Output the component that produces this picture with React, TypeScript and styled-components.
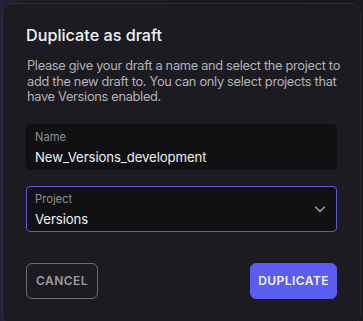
import React from 'react';
import styled, { createGlobalStyle } from 'styled-components';

const GlobalStyle = createGlobalStyle`
    html, body {
        margin: 0;
        padding: 0;
        background: #17171d;
        font-family: Inter, "Noto Sans", sans-serif;
        -webkit-font-smoothing: antialiased;
    }
`;

const Backdrop = styled.div`
    width: 363px;
    height: 321px;
    box-sizing: border-box;
    padding: 3px 2px 0 2px;
    overflow: hidden;
    background: linear-gradient(90deg, #24233a 0px, #1b1b24 30px, #18181e 100%);
`;

const Dialog = styled.div`
    box-sizing: border-box;
    height: 322px;
    display: flex;
    flex-direction: column;
    padding: 19px 23px 0 23px;
    background: #1c1b21;
    border: 1px solid #2c2c33;
    border-radius: 10px;
`;

const Title = styled.h2`
    margin: 0;
    font-size: 16.2px;
    font-weight: 500;
    line-height: 24px;
    color: #f2f2f4;
`;

const Description = styled.p`
    margin: 11px -4px 0 1px;
    font-size: 12.8px;
    letter-spacing: -0.3px;
    line-height: 15.6px;
    color: #b3b3b8;
`;

const Field = styled.div<{ $focused?: boolean }>`
    box-sizing: border-box;
    height: 46px;
    margin-top: ${p => (p.$focused ? '16px' : '19px')};
    padding: 5px 8px 0 8px;
    display: flex;
    align-items: center;
    background: #111114;
    border: 1px solid ${p => (p.$focused ? '#5a5ad8' : '#111114')};
    border-radius: 4px;
`;

const FieldBody = styled.div`
    flex: 1;
    display: flex;
    flex-direction: column;
    align-self: flex-start;
`;

const Label = styled.span`
    font-size: 11.2px;
    line-height: 14px;
    color: #8f8f95;
`;

const Value = styled.span`
    margin-top: 4px;
    font-size: 13.2px;
    letter-spacing: -0.1px;
    line-height: 18px;
    color: #f0f0f2;
`;

const Chevron = styled.svg`
    width: 12px;
    height: 12px;
    margin: 0 2px 4px 0;
`;

const Actions = styled.div`
    margin-top: 31px;
    display: flex;
    justify-content: space-between;
`;

const Button = styled.button<{ $primary?: boolean }>`
    box-sizing: border-box;
    height: 36px;
    padding: 0 ${p => (p.$primary ? '7px' : '9px')};
    font-family: Inter, "Noto Sans", sans-serif;
    font-size: 12px;
    font-weight: 600;
    letter-spacing: 0.45px;
    text-transform: uppercase;
    border-radius: 6px;
    cursor: pointer;
    color: ${p => (p.$primary ? '#f4f4ff' : '#9c9ca2')};
    background: ${p => (p.$primary ? '#5b5cf0' : 'transparent')};
    border: 1px solid ${p => (p.$primary ? '#5b5cf0' : '#6c6c72')};
`;

const App: React.FC = () => (
    <>
        <GlobalStyle />
        <Backdrop>
            <Dialog>
                <Title>Duplicate as draft</Title>
                <Description>
                    Please give your draft a name and select the project to add the new draft to. You can only select projects that have Versions enabled.
                </Description>
                <Field>
                    <FieldBody>
                        <Label>Name</Label>
                        <Value>New_Versions_development</Value>
                    </FieldBody>
                </Field>
                <Field $focused>
                    <FieldBody>
                        <Label>Project</Label>
                        <Value>Versions</Value>
                    </FieldBody>
                    <Chevron viewBox="0 0 12 12" fill="none">
                        <path d="M1.5 4l4.5 4.5L10.5 4" stroke="#a0a0a6" strokeWidth="1.5" strokeLinecap="round" strokeLinejoin="round" />
                    </Chevron>
                </Field>
                <Actions>
                    <Button>Cancel</Button>
                    <Button $primary>Duplicate</Button>
                </Actions>
            </Dialog>
        </Backdrop>
    </>
);

export default App;
